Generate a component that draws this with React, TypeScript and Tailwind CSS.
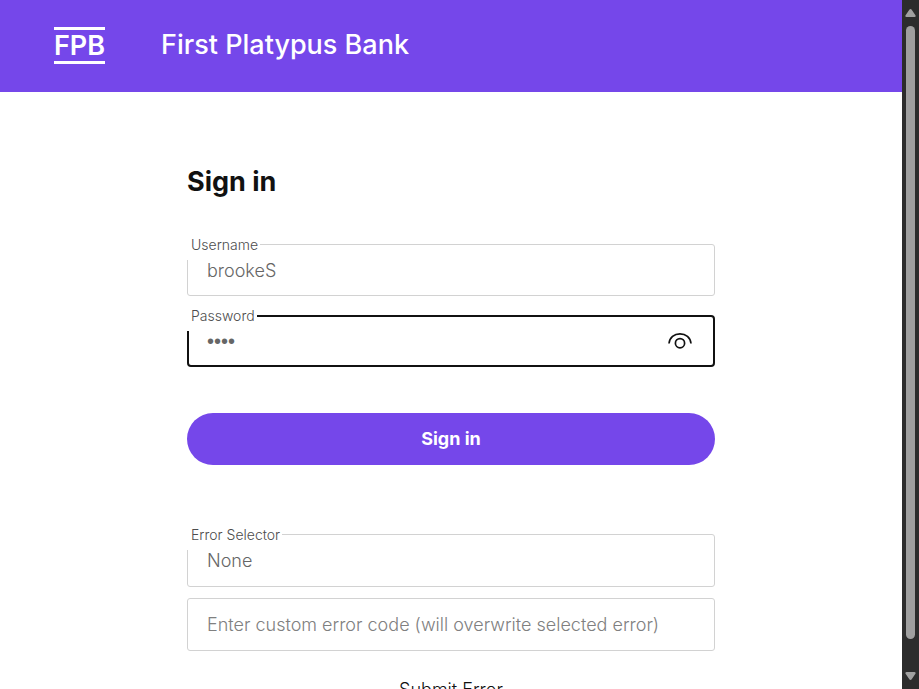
import { useState } from "react";

const fieldBase =
  "block w-full appearance-none rounded-[3px] border border-[#d2d2d2] bg-white px-[19px] text-lg font-light text-[#666666] outline-none placeholder:text-[#808080]";

const labelBase =
  "absolute -top-2 left-0 bg-white pb-1.5 pl-1 pr-0.5 text-sm font-light leading-[18px] text-[#4d4d4d]";

function EyeIcon() {
  return (
    <svg width="24" height="24" viewBox="0 0 24 24" fill="none" stroke="#111111" strokeWidth="1.7">
      <path d="M1 14.5C1.6 8.6 6.2 4.8 12 4.8S22.4 8.6 23 14.5" />
      <circle cx="12" cy="14.2" r="4.6" />
    </svg>
  );
}

function Scrollbar() {
  return (
    <div
      aria-hidden="true"
      className="flex w-[17px] flex-shrink-0 flex-col items-center justify-between bg-[#2c2c2c] py-2"
    >
      <svg width="11" height="10" viewBox="0 0 11 10" fill="#a0a0a0">
        <path d="M5.5 1Q6.2 1 6.7 1.8L10.6 7.5Q11 9 9.5 9H1.500Q0 9 .4 7.5L4.3 1.8Q4.8 1 5.5 1Z" />
      </svg>
      <div className="mb-8 mt-2 w-[9px] flex-1 rounded-full bg-[#9f9f9f]" />
      <svg width="11" height="10" viewBox="0 0 11 10" fill="#a0a0a0">
        <path d="M5.5 9Q6.2 9 6.7 8.2L10.6 2.5Q11 1 9.5 1H1.500Q0 1 .4 2.5L4.3 8.2Q4.8 9 5.5 9Z" />
      </svg>
    </div>
  );
}

export default function App() {
  const [username, setUsername] = useState("brookeS");
  const [password, setPassword] = useState("1234");
  const [showPassword, setShowPassword] = useState(false);

  return (
    <div className="flex h-screen bg-white font-['Inter',sans-serif]">
      <div className="min-w-0 flex-1 overflow-hidden">
        {/* Bank header */}
        <header className="flex h-[92px] items-center gap-14 bg-[#7547ea] px-[54px] pb-0.5 text-white">
          <div className="flex h-[37px] items-center border-y-[3px] border-white text-[27px] font-semibold leading-none">
            FPB
          </div>
          <p className="text-[27px] font-medium leading-8">First Platypus Bank</p>
        </header>

        <main className="mx-auto max-w-[528px] pt-[72px]">
          {/* Sign in form */}
          <form onSubmit={(e) => e.preventDefault()}>
            <h1 className="text-[27px] font-bold leading-9 text-[#111111]">Sign in</h1>

            <div className="relative mt-11">
              <input
                id="username"
                type="text"
                value={username}
                onChange={(e) => setUsername(e.target.value)}
                className={`h-[52px] ${fieldBase}`}
              />
              <label htmlFor="username" className={labelBase}>
                Username
              </label>
            </div>

            <div className="relative mt-[19px]">
              <input
                id="password"
                type={showPassword ? "text" : "password"}
                value={password}
                onChange={(e) => setPassword(e.target.value)}
                className="block h-[52px] w-full rounded-[4px] border-2 border-[#111111] bg-white pl-[18px] pr-14 font-['Liberation_Sans',sans-serif] text-xl text-[#666666] outline-none"
              />
              <label htmlFor="password" className={labelBase}>
                Password
              </label>
              <button
                type="button"
                aria-label="Show password"
                onClick={() => setShowPassword(!showPassword)}
                className="absolute inset-y-0 right-[23px] flex items-center"
              >
                <EyeIcon />
              </button>
            </div>

            <button
              type="submit"
              className="mt-[46px] h-[52px] w-full rounded-full bg-[#7547ea] text-lg font-bold text-white"
            >
              Sign in
            </button>
          </form>

          {/* Error testing */}
          <form onSubmit={(e) => e.preventDefault()} className="mt-[69px]">
            <div className="relative">
              <select id="error-selector" className={`h-[53px] ${fieldBase}`}>
                <option>None</option>
              </select>
              <label htmlFor="error-selector" className={labelBase}>
                Error Selector
              </label>
            </div>
            <input
              type="text"
              aria-label="Custom error code"
              placeholder="Enter custom error code (will overwrite selected error)"
              className={`mt-[11px] h-[53px] ${fieldBase}`}
            />
            <button type="submit" className="mt-3 h-[53px] w-full text-lg font-light text-[#111111]">
              Submit Error
            </button>
          </form>
        </main>
      </div>

      <Scrollbar />
    </div>
  );
}
